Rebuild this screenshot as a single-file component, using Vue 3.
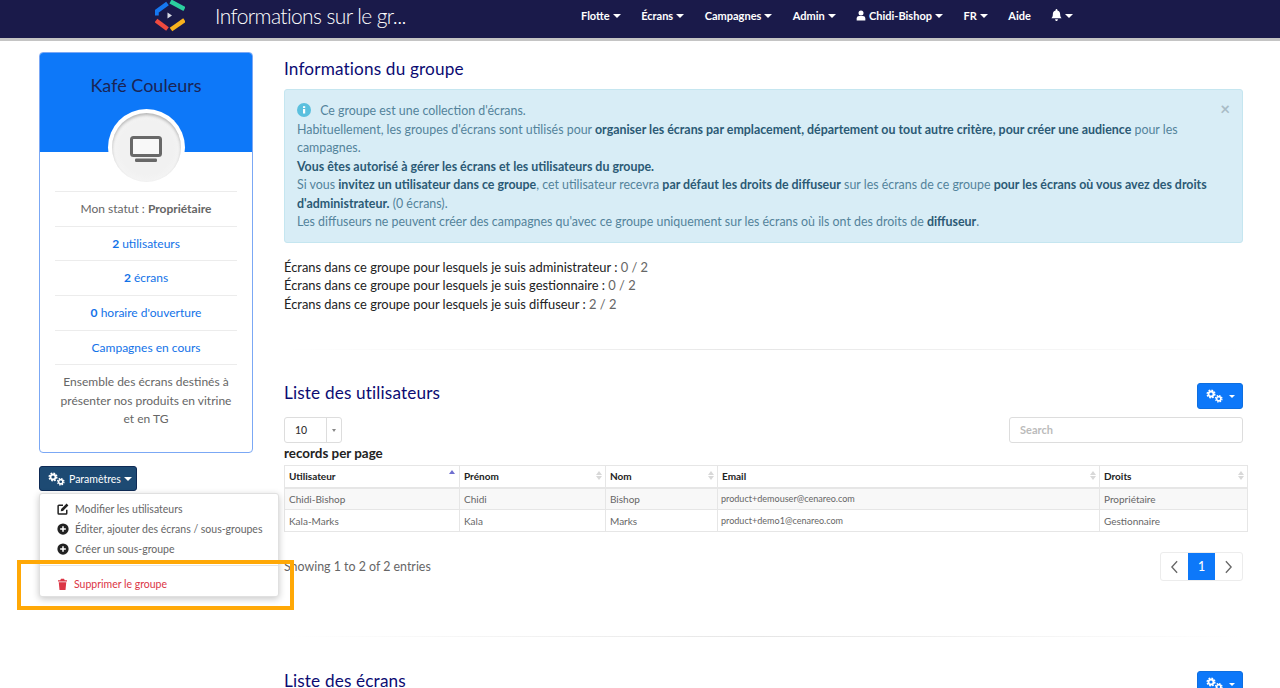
<template>
  <div class="app">
    <svg class="defs" width="0" height="0">
      <symbol id="gear" viewBox="0 0 20 20">
        <circle cx="10" cy="10" r="5" fill="none" stroke="currentColor" stroke-width="3.6" />
        <circle cx="10" cy="10" r="7.6" fill="none" stroke="currentColor" stroke-width="3" stroke-dasharray="3.4 2.57" />
      </symbol>
      <symbol id="cogs" viewBox="0 0 17 14">
        <use href="#gear" x="0" y="0" width="10" height="10" />
        <use href="#gear" x="8.500" y="5.500" width="8.500" height="8.500" />
      </symbol>
      <symbol id="plus-circle" viewBox="0 0 16 16">
        <circle cx="8" cy="8" r="7.5" fill="currentColor" />
        <path d="M8 4.200v7.600M4.200 8h7.600" stroke="#fff" stroke-width="2" />
      </symbol>
    </svg>

    <header class="navbar">
      <svg class="logo" viewBox="5 0 30 32">
        <path d="M17.500 3.500 6.500 11.500V15.500" fill="none" stroke="#1577f0" stroke-width="4.500" stroke-linejoin="bevel" />
        <path d="M20.500 1.500 34.500 9" fill="none" stroke="#2bcf9f" stroke-width="4.500" />
        <path d="M6 20.500 17.500 29" fill="none" stroke="#ee4a3f" stroke-width="4.500" />
        <path d="M21 29.500 34.500 20" fill="none" stroke="#f9b21d" stroke-width="4.500" />
        <path d="M17.500 12.500 22 15.500 17.500 18.500Z" fill="#d8dbe6" />
      </svg>
      <div class="page-title">Informations sur le gr...</div>
      <nav class="menu">
        <a class="caret">Flotte</a>
        <a class="caret">Écrans</a>
        <a class="caret">Campagnes</a>
        <a class="caret">Admin</a>
        <a class="caret user"><svg class="nav-icon" viewBox="0 0 12 12"><circle cx="6" cy="3" r="3" fill="#fff" /><path d="M.8 12V9.600C.8 7.600 2.400 6.600 3.600 6.600h4.800c1.200 0 2.800 1 2.800 3V12Z" fill="#fff" /></svg> Chidi-Bishop</a>
        <a class="caret">FR</a>
        <a>Aide</a>
        <a class="caret"><svg class="nav-icon bell" viewBox="0 0 12 13"><path d="M6 0c.6 0 1 .4 1 1v.6C9 2 10 3.600 10 6c0 2.500 1 3.400 1.600 4H.4C1 9.400 2 8.500 2 6c0-2.400 1-4 3-4.400V1c0-.6.4-1 1-1ZM4.500 11h3C7.500 12 6.800 13 6 13s-1.500-1-1.500-2Z" fill="#fff" /></svg></a>
      </nav>
    </header>

    <div class="page">
      <aside class="side">
        <section class="card">
          <div class="card-head">
            <h2>Kafé Couleurs</h2>
          </div>
          <div class="avatar">
            <div class="avatar-in">
              <svg viewBox="0 0 32 26" width="32" height="26">
                <rect x="1.500" y="1.500" width="29" height="18" rx="2" fill="#f8f8f8" stroke="#686868" stroke-width="3" />
                <rect x="5" y="22.500" width="22" height="3.500" rx="1.200" fill="#686868" />
              </svg>
            </div>
          </div>
          <ul class="facts">
            <li>Mon statut : <b>Propriétaire</b></li>
            <li class="lnk"><b>2</b> utilisateurs</li>
            <li class="lnk"><b>2</b> écrans</li>
            <li class="lnk"><b>0</b> horaire d'ouverture</li>
            <li class="lnk">Campagnes en cours</li>
            <li class="desc">Ensemble des écrans destinés à présenter nos produits en vitrine et en TG</li>
          </ul>
        </section>

        <div class="drop-wrap">
          <button class="btn-dark">
            <svg class="cogs" width="17" height="14"><use href="#cogs" /></svg>
            <span class="caret">Paramètres</span>
          </button>
          <div class="drop">
            <a>
              <svg viewBox="0 0 16 16" width="12" height="12"><path d="M13 9v4.500a1 1 0 0 1-1 1H2.500a1 1 0 0 1-1-1V4a1 1 0 0 1 1-1H8" fill="none" stroke="#222" stroke-width="2" /><path d="M5.500 8 12.800 .8l2.400 2.400L8 10.500l-3 .5Z" fill="#222" /></svg>
              Modifier les utilisateurs
            </a>
            <a><svg width="12" height="12"><use href="#plus-circle" /></svg>Éditer, ajouter des écrans / sous-groupes</a>
            <a><svg width="12" height="12"><use href="#plus-circle" /></svg>Créer un sous-groupe</a>
            <div class="drop-sep"></div>
            <a class="danger">
              <svg viewBox="0 0 14 16" width="11" height="12"><path d="M1 3h12v1.500H1ZM5 1h4l1 2H4ZM2 5.500h10L11 16H3Z" fill="#dc3545" /></svg>
              Supprimer le groupe
            </a>
          </div>
        </div>
      </aside>

      <main class="main">
        <h1 class="sec-title first">Informations du groupe</h1>
        <div class="alert">
          <span class="close">×</span>
          <svg class="info" viewBox="0 0 14 14" width="14" height="14"><circle cx="7" cy="7" r="7" fill="#5bc0de" /><rect x="6" y="6" width="2.200" height="4.500" fill="#fff" /><rect x="6" y="3.200" width="2.200" height="1.800" fill="#fff" /></svg>
          Ce groupe est une collection d'écrans.<br />
          Habituellement, les groupes d'écrans sont utilisés pour <b>organiser les écrans par emplacement, département ou tout autre critère, pour créer une audience</b> pour les campagnes.<br />
          <b>Vous êtes autorisé à gérer les écrans et les utilisateurs du groupe.</b><br />
          Si vous <b>invitez un utilisateur dans ce groupe</b>, cet utilisateur recevra <b>par défaut les droits de diffuseur</b> sur les écrans de ce groupe <b>pour les écrans où vous avez des droits d'administrateur.</b> (0 écrans).<br />
          Les diffuseurs ne peuvent créer des campagnes qu'avec ce groupe uniquement sur les écrans où ils ont des droits de <b>diffuseur</b>.
        </div>
        <div class="stats">
          <p v-for="s in stats" :key="s.label"><span>Écrans dans ce groupe pour lesquels je suis {{ s.label }} :</span> {{ s.value }}</p>
        </div>

        <hr class="sep sep-a" />

        <div class="sec-head">
          <h1 class="sec-title">Liste des utilisateurs</h1>
          <button class="btn-blue"><svg width="17" height="14"><use href="#cogs" /></svg><i class="tri"></i></button>
        </div>

        <div class="tools">
          <div class="len">
            <div class="select"><span>10</span><em><i class="tri small"></i></em></div>
            <strong>records per page</strong>
          </div>
          <div class="search">Search</div>
        </div>

        <table class="grid">
          <colgroup>
            <col v-for="c in cols" :key="c.name" :style="{ width: c.width + 'px' }" />
          </colgroup>
          <thead>
            <tr>
              <th v-for="(c, i) in cols" :key="c.name">
                {{ c.name }}
                <span class="sort" :class="{ asc: i === 0 }"><i class="up"></i><i class="down"></i></span>
              </th>
            </tr>
          </thead>
          <tbody>
            <tr v-for="r in rows" :key="r[0]">
              <td v-for="v in r" :key="v">{{ v }}</td>
            </tr>
          </tbody>
        </table>

        <div class="foot">
          <span>Showing 1 to 2 of 2 entries</span>
          <div class="pager">
            <a><svg viewBox="0 0 10 16" width="9" height="14"><path d="M8 1.500 2 8l6 6.500" fill="none" stroke="#666" stroke-width="1.500" /></svg></a>
            <a class="on">1</a>
            <a><svg viewBox="0 0 10 16" width="9" height="14"><path d="M2 1.500 8 8l-6 6.500" fill="none" stroke="#666" stroke-width="1.500" /></svg></a>
          </div>
        </div>

        <hr class="sep sep-b" />

        <div class="sec-head">
          <h1 class="sec-title">Liste des écrans</h1>
          <button class="btn-blue"><svg width="17" height="14"><use href="#cogs" /></svg><i class="tri"></i></button>
        </div>
      </main>
    </div>

    <div class="highlight"></div>
  </div>
</template>

<script setup>
const stats = [
  { label: "administrateur", value: "0 / 2" },
  { label: "gestionnaire", value: "0 / 2" },
  { label: "diffuseur", value: "2 / 2" },
];

const cols = [
  { name: "Utilisateur", width: 175 },
  { name: "Prénom", width: 146 },
  { name: "Nom", width: 112 },
  { name: "Email", width: 382 },
  { name: "Droits", width: 148 },
];

const rows = [
  ["Chidi-Bishop", "Chidi", "Bishop", "product+demouser@cenareo.com", "Propriétaire"],
  ["Kala-Marks", "Kala", "Marks", "product+demo1@cenareo.com", "Gestionnaire"],
];
</script>

<style>
html,
body {
  margin: 0;
  background: #fff;
}
</style>

<style scoped>
.app {
  position: relative;
  height: 688px;
  overflow: hidden;
  font-family: Lato, "Open Sans", sans-serif;
  font-size: 13px;
  color: #666;
}
.defs {
  position: absolute;
}
.navbar {
  display: flex;
  align-items: center;
  height: 38px;
  box-sizing: content-box;
  padding-left: 155px;
  background: #1a1a4a;
  border-bottom: 3px solid #c4c4c4;
  color: #fff;
}
.logo {
  align-self: flex-start;
  flex: none;
  width: 30px;
  height: 32px;
}
.page-title {
  width: 366px;
  margin: -8px 0 0 30px;
  font-size: 21px;
  font-weight: 300;
  letter-spacing: -0.6px;
  white-space: nowrap;
}
.menu {
  display: flex;
  align-items: center;
  gap: 20.500px;
  margin-top: -8px;
  font-size: 11px;
  font-weight: 700;
}
.menu a {
  white-space: nowrap;
}
.nav-icon {
  width: 10px;
  height: 11px;
  vertical-align: -1px;
}
.nav-icon.bell {
  width: 11px;
  height: 12px;
}
.caret::after {
  content: "";
  display: inline-block;
  margin-left: 3px;
  vertical-align: 2px;
  border: 4px solid transparent;
  border-top-color: currentColor;
  border-bottom-width: 0;
}
.page {
  display: flex;
  gap: 31px;
  padding: 11px 0 0 39px;
}
.side {
  width: 214px;
  flex: none;
}
.card {
  height: 401px;
  box-sizing: border-box;
  border: 1px solid #7ba8f5;
  border-radius: 4px;
  overflow: hidden;
}
.card-head {
  height: 99px;
  padding-top: 21px;
  box-sizing: border-box;
  background: #0d78f9;
  text-align: center;
}
.card-head h2 {
  margin: 0;
  font-size: 18px;
  font-weight: 400;
  color: #1a2456;
}
.avatar {
  width: 77px;
  height: 77px;
  margin: -43px auto 0;
  padding: 4px;
  box-sizing: border-box;
  border-radius: 50%;
  background: #fff;
  position: relative;
}
.avatar-in {
  display: flex;
  align-items: center;
  justify-content: center;
  height: 100%;
  padding-top: 3px;
  box-sizing: border-box;
  border-radius: 50%;
  background: radial-gradient(circle at 50% 50%, #f1f1f1 55%, #fafafa 100%);
  box-shadow: inset 0 2px 3px rgba(0, 0, 0, 0.25);
}
.facts {
  list-style: none;
  margin: 0 15px;
  padding: 5px 0 0;
  font-size: 12px;
  text-align: center;
  line-height: 18.500px;
}
.facts li {
  height: 17.700px;
  padding: 8px 0;
  border-top: 1px solid #ececec;
}
.facts li.desc {
  height: auto;
}
.lnk {
  color: #1272e8;
}
.drop-wrap {
  position: relative;
  margin-top: 13px;
}
.btn-dark {
  display: flex;
  align-items: center;
  gap: 4px;
  width: 98px;
  height: 25px;
  padding: 0 0 0 8px;
  background: #1d4a73;
  border: 1px solid #0e2a55;
  border-radius: 3px;
  color: #fff;
  font: inherit;
  font-size: 10.500px;
}
.cogs {
  color: #fff;
}
.drop {
  position: absolute;
  top: 27px;
  left: 0;
  width: 240px;
  height: 104px;
  box-sizing: border-box;
  padding-top: 5px;
  background: #fff;
  border: 1px solid #e0e0e0;
  border-radius: 3px;
  box-shadow: 0 2px 7px rgba(0, 0, 0, 0.22);
  font-size: 10.500px;
}
.drop a {
  display: flex;
  align-items: center;
  gap: 6px;
  height: 20px;
  padding-left: 17px;
  white-space: nowrap;
}
.drop svg {
  flex: none;
  color: #222;
}
.drop-sep {
  margin: 6px 0 8px;
  border-top: 1px solid #e5e5e5;
}
.drop a.danger {
  color: #dc3545;
}
.main {
  width: 959px;
  flex: none;
}
.sec-title {
  margin: 0;
  font-size: 17.200px;
  line-height: 20px;
  font-weight: 400;
  letter-spacing: 0.15px;
  color: #0b0b72;
}
.first {
  margin-top: 7px;
}
.alert {
  position: relative;
  margin-top: 10px;
  padding: 12px 12px 10px;
  background: #d8edf6;
  border: 1px solid #c5e6f0;
  border-radius: 3px;
  color: #53839b;
  line-height: 18.500px;
  font-size: 12.400px;
}
.alert b {
  color: #2b5a75;
}
.info {
  margin-right: 6px;
  vertical-align: -2px;
}
.close {
  position: absolute;
  top: 10px;
  right: 12px;
  font-size: 17px;
  font-weight: 700;
  color: #a9bcc6;
}
.stats {
  margin-top: 15px;
  font-size: 12.900px;
}
.stats p {
  margin: 0;
  line-height: 18.500px;
}
.stats span {
  color: #222;
}
.sep {
  height: 1px;
  border: 0;
  background: linear-gradient(90deg, transparent, #e6e6e6 50%, transparent);
}
.sep-a {
  margin: 36px 0 33px;
}
.sep-b {
  margin: 55px 0 34px;
}
.sec-head {
  display: flex;
  align-items: flex-start;
  justify-content: space-between;
  height: 26px;
}
.btn-blue {
  display: flex;
  align-items: center;
  justify-content: center;
  gap: 6px;
  width: 46px;
  height: 26px;
  padding: 0;
  background: #0d78f9;
  border: 1px solid #0e6fe0;
  border-radius: 3px;
  color: #fff;
}
.tri {
  display: inline-block;
  border: 3.500px solid transparent;
  border-top-color: currentColor;
  border-bottom-width: 0;
}
.tri.small {
  color: #888;
  border-width: 3px 2.500px 0;
}
.tools {
  display: flex;
  justify-content: space-between;
  align-items: flex-start;
  margin-top: 8px;
}
.select {
  display: flex;
  width: 58px;
  height: 26px;
  box-sizing: border-box;
  border: 1px solid #ddd;
  border-radius: 3px;
  font-size: 10.500px;
  font-weight: 500;
  color: #333;
}
.select span {
  flex: 1;
  padding-left: 10px;
  line-height: 24px;
}
.select em {
  display: flex;
  align-items: center;
  justify-content: center;
  width: 14px;
  border-left: 1px solid #ddd;
}
.len strong {
  display: block;
  margin-top: 2px;
  font-size: 13.400px;
  line-height: 16px;
  color: #222;
}
.search {
  width: 234px;
  height: 26px;
  box-sizing: border-box;
  padding-left: 10px;
  border: 1px solid #ddd;
  border-radius: 3px;
  line-height: 24px;
  font-size: 11px;
  font-weight: 700;
  color: #bbb;
}
.grid {
  width: 963px;
  margin-top: 4px;
  table-layout: fixed;
  border-collapse: collapse;
  font-size: 10px;
}
.grid th,
.grid td {
  height: 22px;
  box-sizing: border-box;
  padding: 0 4px;
  border: 1px solid #e6e6e6;
  text-align: left;
  white-space: nowrap;
}
.grid td:nth-child(4) {
  padding-left: 3px;
  font-size: 9.050px;
}
.grid th {
  position: relative;
  border-bottom-width: 2px;
  font-weight: 700;
  color: #222;
}
.grid tbody tr:nth-child(odd) {
  background: #f8f8f8;
}
.sort {
  position: absolute;
  top: 5px;
  right: 3px;
}
.sort i {
  display: block;
  border: 3px solid transparent;
  border-top-width: 0;
  border-bottom: 4px solid #d8d8d8;
}
.sort .down {
  margin-top: 1px;
  border-bottom-width: 0;
  border-top: 4px solid #d8d8d8;
}
.sort.asc {
  top: 4px;
  right: 4px;
}
.sort.asc .up {
  border-bottom-color: #6f6fd0;
}
.sort.asc .down {
  border-top-color: transparent;
}
.foot {
  display: flex;
  justify-content: space-between;
  align-items: center;
  margin-top: 20px;
  font-size: 12.400px;
}
.pager {
  display: flex;
  height: 29px;
  box-sizing: border-box;
  border: 1px solid #ececec;
  border-radius: 3px;
}
.pager a {
  display: flex;
  align-items: center;
  justify-content: center;
  width: 27px;
}
.pager a.on {
  background: #0d78f9;
  color: #fff;
  font-weight: 500;
}
.highlight {
  position: absolute;
  left: 17px;
  top: 560px;
  width: 269px;
  height: 42px;
  border: 4px solid #ffa806;
}
</style>
